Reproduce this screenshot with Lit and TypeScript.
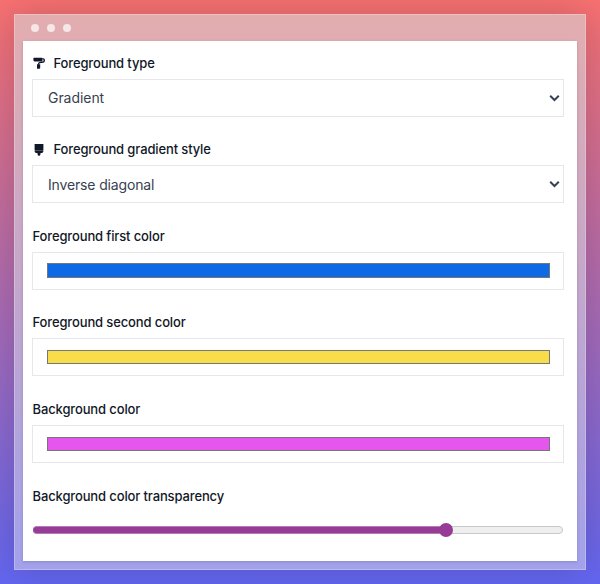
import { LitElement, html, css, svg } from "lit";
import { customElement, property } from "lit/decorators.js";
import { classMap } from "lit/directives/class-map.js";
import { styleMap } from "lit/directives/style-map.js";

const roller = svg`<path d="M1 .8h7.8q.6 0 .6.6v2.4q0 .6-.6.6H1.4L.4 3.4V1.4Q.4.8 1 .8z"/><path d="M9.200 1.900h1.200q.8 0 .8.8v1.400q0 .8-.8.9L6.600 5.600q-1 .2-1 1.200v.8" fill="none" stroke="currentColor" stroke-width="1.4"/><path d="M4 7.200h3.200v3.600q0 1-1 1H4z"/>`;
const brush = svg`<path d="M2 1h8q.4 0 .4.400v5.500H1.600V1.400Q1.600 1 2 1z"/><path d="M1.600 7.300H10.400v.8q0 1.900-1.700 1.900H7.500v1q0 1.600-1.500 2Q4.500 12.600 4.500 11V10H3.300Q1.600 10 1.600 8.100z"/>`;

@customElement("field-row")
class FieldRow extends LitElement {
  @property() label = "";
  @property() icon = "";

  static styles = css`
    :host { display: block; }
    .label {
      display: flex; align-items: center; height: 20px; margin-bottom: 6px;
      padding-left: 0.5px; font-weight: 500; font-size: 13px; line-height: 20px;
      letter-spacing: -0.13px; color: #111827; white-space: nowrap;
    }
    svg { width: 12px; height: 13px; margin: 0 8.5px 0 0.5px; fill: currentColor; flex: none; }
  `;

  render() {
    return html`
      <div class="label">
        ${this.icon
          ? html`<svg viewBox="0 0 12 13">${this.icon === "roller" ? roller : brush}</svg>`
          : ""}<span>${this.label}</span>
      </div>
      <slot></slot>
    `;
  }
}

@customElement("app-root")
class AppRoot extends LitElement {
  static styles = css`
    :host {
      display: block; box-sizing: border-box; width: 600px; height: 584px;
      padding: 14px; overflow: hidden;
      background: linear-gradient(to bottom, #f87171, #6366f1);
      font-family: Inter, "Liberation Sans", sans-serif;
    }
    * { box-sizing: border-box; }
    .window {
      display: flex; flex-direction: column; height: 556px; padding: 0 8px 8px;
      border: 1px solid rgba(255, 255, 255, 0.25);
      background: linear-gradient(to bottom, #e3adaf, #a2a1eb) border-box;
      box-shadow: 0 0 36px rgba(0, 0, 0, 0.18);
    }
    .bar { display: flex; align-items: center; gap: 8px; height: 26px; padding-left: 8px; }
    .dot { width: 8px; height: 8px; border-radius: 50%; background: rgba(255, 255, 255, 0.7); }
    .panel {
      display: grid; grid-template-rows: 86px 87px 86px 87px 87px auto; align-content: start;
      flex: 1; padding: 12px 13px 0 9px; background: #fff;
      box-shadow: 0 1px 3px rgba(0, 0, 0, 0.15);
    }
    .box {
      display: flex; align-items: center; height: 38px; padding: 0 3px 0 15px;
      border: 1px solid #e5e7eb; font-size: 14px; letter-spacing: -0.15px; color: #374151;
    }
    .value { flex: 1; }
    .value.raised { padding-bottom: 2px; letter-spacing: -0.05px; }
    .chevron { width: 11px; height: 8px; fill: none; stroke: #374151; stroke-width: 2; }
    .box.color { padding: 0 13px 0 14px; }
    .swatch { flex: 1; height: 14px; border: 1px solid #767676; }
    .swatch.tall { height: 15px; margin-bottom: 1px; }
    .slider { display: flex; align-items: center; position: relative; height: 16px; margin: 16px 1px 0; }
    .track {
      width: 100%; height: 8px; border: 1px solid #c8c8c8; border-radius: 4px;
      background: #efefef; overflow: hidden;
    }
    .fill {
      height: 8px; margin: -1px 0 0 -1px; border: solid #b67db6; border-width: 1px 0;
      background: #963c96; position: relative;
    }
    .track { overflow: visible; }
    .fill { border-radius: 4px 0 0 4px; }
    .thumb {
      position: absolute; width: 14px; height: 14px; margin-left: -7px;
      border-radius: 50%; background: #963c96;
    }
  `;

  private level = 77.9;

  private select(value: string, raised = false) {
    return html`<div class="box">
      <span class=${classMap({ value: true, raised })}>${value}</span>
      <svg class="chevron" viewBox="0 0 11 8"><path d="M1.2 1.8 5.5 6 9.8 1.8" /></svg>
    </div>`;
  }

  private color(value: string, tall = false) {
    return html`<div class="box color">
      <div class=${classMap({ swatch: true, tall })} style=${styleMap({ background: value })}></div>
    </div>`;
  }

  render() {
    return html`
      <div class="window">
        <div class="bar"><i class="dot"></i><i class="dot"></i><i class="dot"></i></div>
        <div class="panel">
          <field-row label="Foreground type" icon="roller">${this.select("Gradient", true)}</field-row>
          <field-row label="Foreground gradient style" icon="brush">${this.select("Inverse diagonal")}</field-row>
          <field-row label="Foreground first color">${this.color("#0d6ae4", true)}</field-row>
          <field-row label="Foreground second color">${this.color("#f8dd4a")}</field-row>
          <field-row label="Background color">${this.color("#e556ee")}</field-row>
          <field-row label="Background color transparency">
            <div class="slider">
              <div class="track"><div class="fill" style=${styleMap({ width: `${this.level}%` })}></div></div>
              <span class="thumb" style=${styleMap({ left: `${this.level}%` })}></span>
            </div>
          </field-row>
        </div>
      </div>
    `;
  }
}
